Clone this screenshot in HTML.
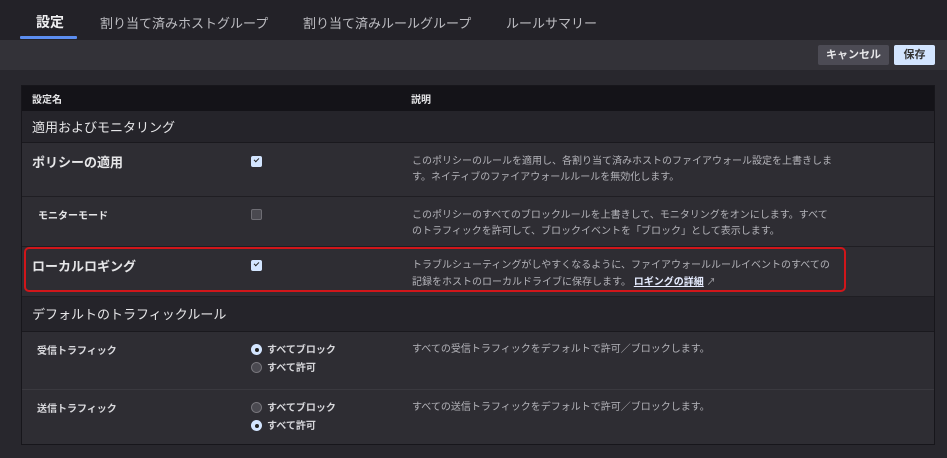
<!DOCTYPE html>
<html><head><meta charset="utf-8"><style>
*{box-sizing:border-box;margin:0;padding:0}
body{width:947px;height:458px;background:#28272d;font-family:"Liberation Sans","Noto Sans CJK JP",sans-serif;color:#e6e6e8;position:relative;overflow:hidden}
.tabs{position:absolute;left:0;top:0;width:947px;height:40px;background:#232228}
.tab{position:absolute;top:13px;font-size:13px;color:#bdbdc2}
.tab.a{color:#f0f0f2;font-weight:bold;font-size:14px;top:12px}
.ul{position:absolute;left:20px;top:36px;width:57px;height:3px;background:#5b8df0;border-radius:1px}
.bar{position:absolute;left:0;top:40px;width:947px;height:30px;background:#333238}
.btn{position:absolute;top:45px;height:20px;font-size:11px;font-weight:bold;text-align:center;line-height:20px;border-radius:2px}
.tbl{position:absolute;left:21px;top:85px;width:914px;height:360px;background:#2e2d33;border:1px solid #17161b}
.row{position:absolute;left:0;width:912px;border-top:1px solid #1f1e23}
.t{position:absolute;white-space:nowrap}
.d{position:absolute;left:390px;font-size:10px;line-height:16px;color:#b4b4ba;white-space:nowrap}
.cb{position:absolute;left:229px;width:11px;height:11px;border-radius:2px}
.on{background:#d3e5ff}
.on:after{content:"";position:absolute;left:3px;top:2px;width:4px;height:2px;border-left:1.5px solid #222;border-bottom:1.5px solid #222;transform:rotate(-45deg)}
.off{background:#4a4950;border:1px solid #6e6d74}
.rd{position:absolute;left:229px;width:11px;height:11px;border-radius:50%}
.ron{background:#d3e5ff}.ron:after{content:"";position:absolute;left:3.5px;top:3.5px;width:4px;height:4px;border-radius:50%;background:#222}
.roff{background:#4a4950;border:1px solid #77767c}
.rl{position:absolute;left:245px;font-size:10px;font-weight:bold;color:#d8d8dc}
</style></head><body>
<div class="tabs">
<div class="tab a" style="left:36px">設定</div>
<div class="tab" style="left:100px">割り当て済みホストグループ</div>
<div class="tab" style="left:303px">割り当て済みルールグループ</div>
<div class="tab" style="left:506px">ルールサマリー</div>
<div class="ul"></div>
</div>
<div class="bar"></div>
<div class="btn" style="left:818px;width:71px;background:#4c4b54;color:#e6e6e8">キャンセル</div>
<div class="btn" style="left:894px;width:41px;background:#d3e5ff;color:#333">保存</div>
<div class="tbl">
<div class="row" style="top:0;height:25px;background:#141318;border:none">
<div class="t" style="left:10px;top:5px;font-size:10px;font-weight:bold">設定名</div>
<div class="t" style="left:389px;top:5px;font-size:10px;font-weight:bold">説明</div></div>
<div class="row" style="top:25px;height:31px;background:#25242a;border:none">
<div class="t" style="left:10px;top:6px;font-size:13px">適用およびモニタリング</div></div>
<div class="row" style="top:56px;height:54px;border-top:1px solid #1a191e">
<div class="t" style="left:10px;top:9px;font-size:13px;font-weight:bold">ポリシーの適用</div>
<div class="cb on" style="top:13px"></div>
<div class="d" style="top:11px">このポリシーのルールを適用し、各割り当て済みホストのファイアウォール設定を上書きしま<br>す。ネイティブのファイアウォールルールを無効化します。</div></div>
<div class="row" style="top:110px;height:50px">
<div class="t" style="left:16px;top:10px;font-size:10px;font-weight:bold">モニターモード</div>
<div class="cb off" style="top:12px"></div>
<div class="d" style="top:11px">このポリシーのすべてのブロックルールを上書きして、モニタリングをオンにします。すべて<br>のトラフィックを許可して、ブロックイベントを「ブロック」として表示します。</div></div>
<div class="row" style="top:160px;height:50px">
<div class="t" style="left:10px;top:9px;font-size:13px;font-weight:bold">ローカルロギング</div>
<div class="cb on" style="top:13px"></div>
<div class="d" style="top:11px">トラブルシューティングがしやすくなるように、ファイアウォールルールイベントのすべての<br>記録をホストのローカルドライブに保存します。 <span style="color:#e6ecff;font-weight:bold;text-decoration:underline">ロギングの詳細</span> <span style="font-size:9px">↗</span></div></div>
<div class="row" style="top:210px;height:35px;background:#25242a">
<div class="t" style="left:10px;top:7px;font-size:13px">デフォルトのトラフィックルール</div></div>
<div class="row" style="top:245px;height:58px;border-top:1px solid #1a191e">
<div class="t" style="left:15px;top:10px;font-size:10px;font-weight:bold;color:#d8d8dc">受信トラフィック</div>
<div class="rd ron" style="top:12px"></div><div class="rl" style="top:9px">すべてブロック</div>
<div class="rd roff" style="top:30px"></div><div class="rl" style="top:27px">すべて許可</div>
<div class="d" style="top:10px">すべての受信トラフィックをデフォルトで許可／ブロックします。</div></div>
<div class="row" style="top:303px;height:56px;border-top:1px solid #3a393f">
<div class="t" style="left:15px;top:10px;font-size:10px;font-weight:bold;color:#d8d8dc">送信トラフィック</div>
<div class="rd roff" style="top:12px"></div><div class="rl" style="top:9px">すべてブロック</div>
<div class="rd ron" style="top:30px"></div><div class="rl" style="top:27px">すべて許可</div>
<div class="d" style="top:10px">すべての送信トラフィックをデフォルトで許可／ブロックします。</div></div>
</div>
<div style="position:absolute;left:24px;top:247px;width:822px;height:45px;border:2px solid #d0161a;border-radius:5px"></div>
</body></html>
